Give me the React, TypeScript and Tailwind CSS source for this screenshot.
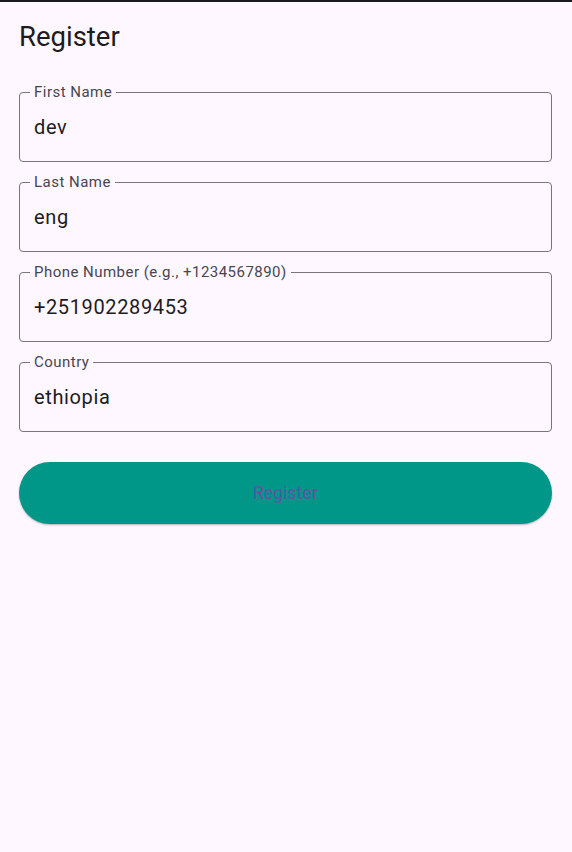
import { useState } from "react";

type Field = {
  label: string;
  value: string;
};

const initialFields: Field[] = [
  { label: "First Name", value: "dev" },
  { label: "Last Name", value: "eng" },
  { label: "Phone Number (e.g., +1234567890)", value: "+251902289453" },
  { label: "Country", value: "ethiopia" },
];

const OutlinedField = ({
  field,
  onChange,
}: {
  field: Field;
  onChange: (v: string) => void;
}) => {
  return (
    <div className="relative h-[70px] rounded-[4px] border border-[#79747e] flex items-center">
      {/* floating label sits on the top border */}
      <span className="absolute left-[10px] top-[-1px] -translate-y-1/2 px-[4px] bg-[#fef7ff] text-[15px] leading-[18px] tracking-[0.47px] text-[#49454f] whitespace-nowrap">
        {field.label}
      </span>
      <input
        value={field.value}
        onChange={(e) => onChange(e.target.value)}
        className="w-full bg-transparent outline-none px-[14px] text-[20px] leading-[24px] tracking-[0.625px] text-[#1d1b20]"
      />
    </div>
  );
};

export default function App() {
  const [fields, setFields] = useState(initialFields);

  const updateField = (index: number, value: string) => {
    setFields((prev) => prev.map((f, i) => (i === index ? { ...f, value } : f)));
  };

  return (
    <div
      className="min-h-[852px] w-full bg-[#fef7ff]"
      style={{ fontFamily: "Roboto, 'Noto Sans', sans-serif" }}
    >
      <div className="h-[2px] bg-[#1d1b20]" />

      <div className="pl-[19px] pr-[20px] pt-[19px]">
        <h1 className="text-[27.5px] leading-[32px] text-[#1d1b20]">Register</h1>

        <div className="mt-[39px] flex flex-col gap-[20px]">
          {fields.map((field, i) => (
            <OutlinedField key={field.label} field={field} onChange={(v) => updateField(i, v)} />
          ))}
        </div>

        <button className="mt-[30px] w-full h-[62px] rounded-full bg-[#009688] shadow-[0_1px_2px_rgba(0,0,0,0.3)] text-[17.5px] tracking-[0.125px] text-[#6750a4]">
          Register
        </button>
      </div>
    </div>
  );
}
